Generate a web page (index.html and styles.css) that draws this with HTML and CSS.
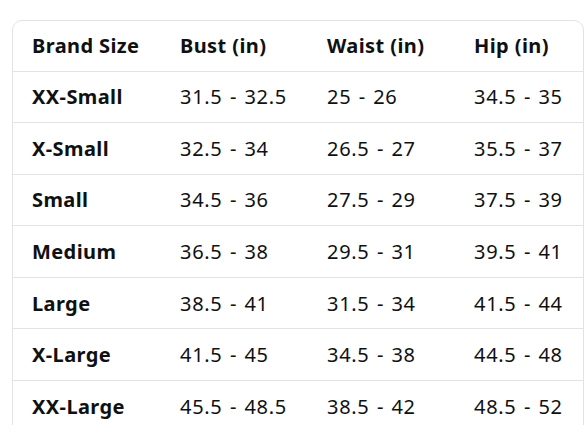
FILE: index.html
```html
<!DOCTYPE html>
<html>
<head>
<meta charset="utf-8">
<link rel="stylesheet" href="styles.css">
</head>
<body>
<div class="viewport">
  <div class="card">
    <div class="row head">
      <div class="cell c1">Brand Size</div>
      <div class="cell c2">Bust (in)</div>
      <div class="cell c3">Waist (in)</div>
      <div class="cell c4">Hip (in)</div>
    </div>
    <div class="row">
      <div class="cell c1 size">XX-Small</div>
      <div class="cell c2">31.5 - 32.5</div>
      <div class="cell c3">25 - 26</div>
      <div class="cell c4">34.5 - 35</div>
    </div>
    <div class="row">
      <div class="cell c1 size">X-Small</div>
      <div class="cell c2">32.5 - 34</div>
      <div class="cell c3">26.5 - 27</div>
      <div class="cell c4">35.5 - 37</div>
    </div>
    <div class="row">
      <div class="cell c1 size">Small</div>
      <div class="cell c2">34.5 - 36</div>
      <div class="cell c3">27.5 - 29</div>
      <div class="cell c4">37.5 - 39</div>
    </div>
    <div class="row">
      <div class="cell c1 size">Medium</div>
      <div class="cell c2">36.5 - 38</div>
      <div class="cell c3">29.5 - 31</div>
      <div class="cell c4">39.5 - 41</div>
    </div>
    <div class="row">
      <div class="cell c1 size">Large</div>
      <div class="cell c2">38.5 - 41</div>
      <div class="cell c3">31.5 - 34</div>
      <div class="cell c4">41.5 - 44</div>
    </div>
    <div class="row">
      <div class="cell c1 size">X-Large</div>
      <div class="cell c2">41.5 - 45</div>
      <div class="cell c3">34.5 - 38</div>
      <div class="cell c4">44.5 - 48</div>
    </div>
    <div class="row">
      <div class="cell c1 size">XX-Large</div>
      <div class="cell c2">45.5 - 48.5</div>
      <div class="cell c3">38.5 - 42</div>
      <div class="cell c4">48.5 - 52</div>
    </div>
  </div>
</div>
</body>
</html>
```
FILE: styles.css
```css
html, body {
  margin: 0;
  padding: 0;
  background: #ffffff;
}
body {
  font-family: "Noto Sans", "Open Sans", sans-serif;
  color: #0f1111;
}
.viewport {
  height: 425px;
  overflow: hidden;
  padding: 20px 0 0 12px;
  box-sizing: border-box;
}
.card {
  width: 572px;
  box-sizing: border-box;
  border: 1px solid #e3e3e3;
  border-radius: 10px 10px 0 0;
}
.row {
  display: grid;
  grid-template-columns: 148px 147px 147px 1fr;
  height: 51.6px;
  box-sizing: border-box;
  border-bottom: 1px solid #e3e3e3;
  align-items: center;
}
.head {
  height: 50.5px;
}
.cell {
  padding-left: 19px;
  font-size: 20px;
  letter-spacing: 0.7px;
  word-spacing: 1.5px;
  white-space: nowrap;
}
.head .cell, .size {
  font-weight: 700;
  letter-spacing: 0.4px;
  word-spacing: 0;
}
```
